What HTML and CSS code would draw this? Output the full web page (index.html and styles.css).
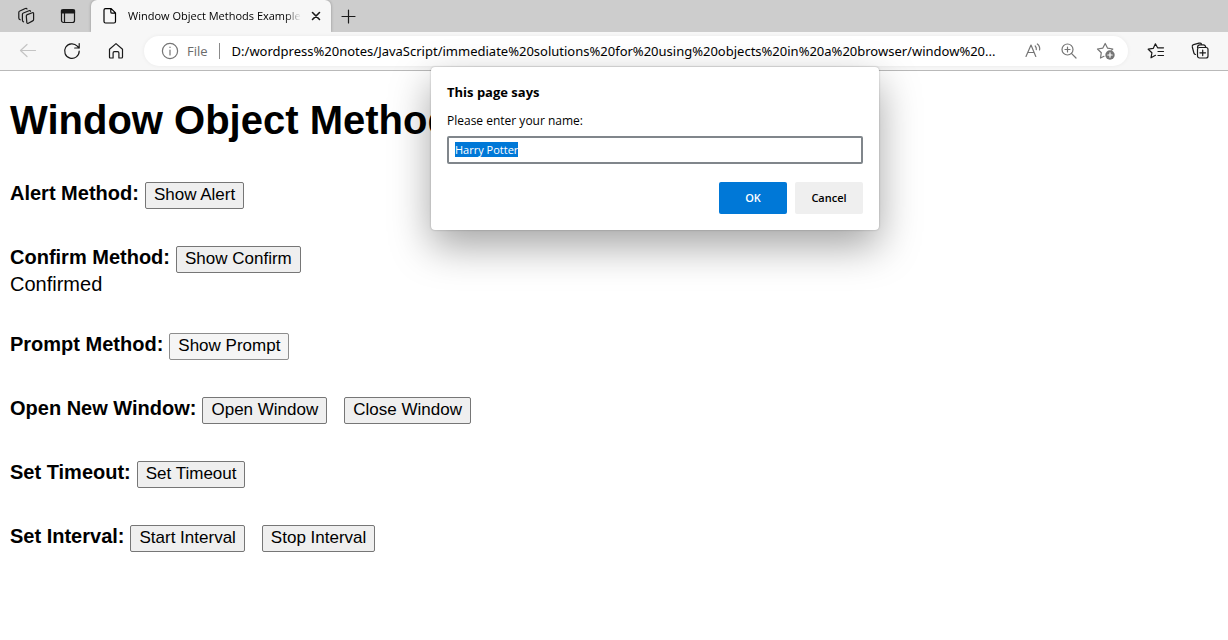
FILE: index.html
```html
<!DOCTYPE html>
<html lang="en">
<head>
<meta charset="utf-8">
<meta name="viewport" content="width=device-width, initial-scale=1">
<title>Window Object Methods Example</title>
<link rel="stylesheet" href="styles.css">
</head>
<body>
<header class="browser">
  <div class="tabstrip">
    <button class="icon-btn strip-btn" aria-label="Workspaces">
      <svg width="18" height="18" viewBox="0 0 18 18"><path d="M9.300 9q0-1 1-1.400l5-1.800q1.300-.4 1.300.9v5.800q0 1-.9 1.400l-4.400 2.300q-1.300.6-1.500-.8zM6.500 14.800q-1.100-.3-1.100-1.500V7.500q0-1.100 1-1.500l5.600-2.300q1.200-.4 1.500.6M3.200 12.800Q1.800 12.300 1.800 11V5.500q0-1.100 1-1.500L8.300 1.500q1.300-.5 1.700.5"/></svg>
    </button>
    <button class="icon-btn strip-btn" aria-label="Tab actions">
      <svg width="18" height="18" viewBox="0 0 18 18"><rect x="2.500" y="2.500" width="13" height="13" rx="2"/><path class="solid" d="M2.500 3h13v3h-13z"/><path d="M5.500 6v9.500"/></svg>
    </button>
    <div class="tab">
      <svg width="18" height="18" viewBox="0 0 18 18"><path d="M4.500 1.600h5.700l4.300 4.300v8.600q0 1.500-1.500 1.500H4.500Q3 16 3 14.500V3.100q0-1.500 1.500-1.500zM9.800 1.800v3.100q0 1.300 1.300 1.300h3.200"/></svg>
      <span class="tab-title">Window Object Methods Example</span>
      <button class="icon-btn" aria-label="Close tab">
        <svg width="12" height="12" viewBox="0 0 12 12"><path class="thick" d="m2.500 2.500 7 7M9.500 2.500l-7 7"/></svg>
      </button>
    </div>
    <button class="icon-btn new-tab" aria-label="New tab">
      <svg width="16" height="16" viewBox="0 0 16 16"><path d="M8.500 2v13M2 8.500h13"/></svg>
    </button>
  </div>
  <div class="toolbar">
    <nav class="nav-buttons">
      <button class="icon-btn disabled" aria-label="Back" disabled>
        <svg width="18" height="18" viewBox="0 0 18 18"><path d="M16.500 8.500H1.500M8 2.500l-6.500 6 6.500 6"/></svg>
      </button>
      <button class="icon-btn" aria-label="Refresh">
        <svg width="18" height="18" viewBox="0 0 18 18"><path d="M16.200 9A7.300 7.300 0 1 1 14.300 4.200L16 6M16.200 1.500V6h-4.500"/></svg>
      </button>
      <button class="icon-btn" aria-label="Home">
        <svg width="18" height="18" viewBox="0 0 18 18"><path d="M2.500 7.300 9 1.600l6.500 5.700v7.700q0 1-1 1h-2.600V11q0-1.300-1.300-1.300H7.400Q6.100 9.700 6.100 11v5H3.500q-1 0-1-1z"/></svg>
      </button>
    </nav>
    <div class="address">
      <svg class="muted" width="18" height="18" viewBox="0 0 18 18"><circle cx="9" cy="9" r="7.600"/><path d="M9 8v5M9 5v.5"/></svg>
      <span class="scheme">File</span>
      <span class="url">D:/wordpress%20notes/JavaScript/immediate%20solutions%20for%20using%20objects%20in%20a%20browser/window%20...</span>
      <div class="address-actions">
        <button class="icon-btn muted" aria-label="Read aloud">
          <svg width="18" height="18" viewBox="0 0 18 18"><path d="M2 14.500 7 3l4.800 11.500M3.800 10.500h6.400M11.200 4q1.500 1.500 1.100 3.600M13.300 2q3 2.300 2.300 6"/></svg>
        </button>
        <button class="icon-btn muted" aria-label="Zoom">
          <svg width="18" height="18" viewBox="0 0 18 18"><circle cx="7.500" cy="7.500" r="5.500"/><path d="m11.400 11.400 4.600 4.600M7.500 5v5M5 7.500h5"/></svg>
        </button>
        <button class="icon-btn muted" aria-label="Add to favorites">
          <svg width="20" height="18" viewBox="0 0 20 18"><path d="M8 14.300 4.500 16l.8-5.300L1.500 7l5.200-.8L9.200 1.500l2.400 4.700 5.200.8-1.200 1.200"/><circle class="badge" cx="14" cy="13" r="4.700"/><path class="plus" d="M14 10.800v4.400M11.800 13h4.400"/></svg>
        </button>
      </div>
    </div>
    <div class="tool-buttons">
      <button class="icon-btn" aria-label="Favorites">
        <svg width="18" height="18" viewBox="0 0 18 18"><path d="M8.500 13.300 4 15.800l.9-5L1.200 7.200l5-.8 2.200-4.600 2.200 4h5.900M11 9.500h5.500M11 13.500h5.500"/></svg>
      </button>
      <button class="icon-btn" aria-label="Collections">
        <svg width="18" height="18" viewBox="0 0 18 18"><rect x="6.500" y="5.500" width="10.500" height="10.500" rx="2"/><path d="M11.700 8v5.600M8.900 10.800h5.600M4.500 12.500Q3.200 12.200 2.900 11L1.300 5q-.4-1.800 1.300-2.300l5.400-1.500q1.900-.4 2.400.5M6.500 5.500q.2-2.700 2.300-2.700h3.700q1.800 0 2.300 2.500"/></svg>
      </button>
    </div>
  </div>
</header>

<main class="page">
  <h1 class="page-title">Window Object Methods Example</h1>
  <section class="demo"><b class="demo-label">Alert Method:</b><button class="demo-btn">Show Alert</button></section>
  <section class="demo"><b class="demo-label">Confirm Method:</b><button class="demo-btn">Show Confirm</button>
    <p class="demo-result">Confirmed</p></section>
  <section class="demo"><b class="demo-label">Prompt Method:</b><button class="demo-btn active">Show Prompt</button></section>
  <section class="demo"><b class="demo-label">Open New Window:</b><button class="demo-btn">Open Window</button><button class="demo-btn second">Close Window</button></section>
  <section class="demo"><b class="demo-label">Set Timeout:</b><button class="demo-btn">Set Timeout</button></section>
  <section class="demo"><b class="demo-label">Set Interval:</b><button class="demo-btn">Start Interval</button><button class="demo-btn second">Stop Interval</button></section>
</main>

<form class="prompt" role="dialog" aria-labelledby="prompt-title">
  <h2 class="prompt-title" id="prompt-title">This page says</h2>
  <label class="prompt-label" for="name">Please enter your name:</label>
  <input class="prompt-input" id="name" type="text" value="Harry Potter" autocomplete="off" spellcheck="false">
  <div class="prompt-actions">
    <button class="prompt-btn primary" type="button">OK</button>
    <button class="prompt-btn" type="button">Cancel</button>
  </div>
</form>
<script src="script.js"></script>
</body>
</html>
```

FILE: styles.css
```css
* { box-sizing: border-box; }

body {
  margin: 0;
  background: #fff;
  color: #000;
  font-family: "Liberation Sans", Arial, sans-serif;
}

button { font: inherit; color: inherit; }

svg {
  display: block;
  flex: none;
  fill: none;
  stroke: currentColor;
  stroke-width: 1.2;
  stroke-linejoin: round;
  stroke-linecap: round;
}
svg .solid, svg .badge { fill: currentColor; }
svg .badge { stroke: none; }
svg .plus { stroke: #fff; }
svg .thick { stroke-width: 1.6; }

/* Browser frame */
.browser {
  font-family: "Open Sans", "Noto Sans", sans-serif;
  background: #f7f7f7;
  border-bottom: 1px solid #b9b9b9;
}
.icon-btn {
  display: flex;
  flex: none;
  padding: 0;
  border: 0;
  background: none;
  color: #1a1a1a;
}
.icon-btn.muted, .muted { color: #757575; }
.icon-btn.disabled { color: #c4c4c4; }

.tabstrip {
  display: flex;
  align-items: center;
  height: 32px;
  background: #cdcdcd;
}
.strip-btn { margin-left: 17px; }
.strip-btn + .strip-btn { margin-left: 24px; }
.tab {
  display: flex;
  align-items: center;
  gap: 9px;
  width: 240px;
  height: 32px;
  margin-left: 14px;
  padding: 0 9px 0 10px;
  border-radius: 6px 6px 0 0;
  background: #f7f7f7;
  box-shadow: 0 0 3px rgba(0, 0, 0, .3);
}
.tab-title {
  flex: 1;
  overflow: hidden;
  font-size: 11px;
  line-height: 20px;
  white-space: nowrap;
  -webkit-mask-image: linear-gradient(to left, transparent, #000 16px);
  mask-image: linear-gradient(to left, transparent, #000 16px);
}
.new-tab { margin-left: 9px; }

.toolbar {
  position: relative;
  display: flex;
  align-items: center;
  height: 38px;
  padding: 0 19px;
  background: #f7f7f7;
}
.nav-buttons { display: flex; gap: 26px; }
.address {
  display: flex;
  flex: 1;
  align-items: center;
  min-width: 0;
  height: 30px;
  margin: 0 19px;
  padding: 0 12px 0 17px;
  border-radius: 15px;
  background: #fff;
  box-shadow: 0 0 4px rgba(0, 0, 0, .06);
}
.scheme {
  margin-left: 8px;
  padding-right: 11px;
  border-right: 1px solid #8a8a8a;
  color: #6b6b6b;
  font-size: 13px;
  line-height: 16px;
}
.url {
  flex: 1;
  overflow: hidden;
  margin-left: 12px;
  font-family: "Noto Sans", sans-serif;
  font-size: 13px;
  line-height: 20px;
  white-space: nowrap;
}
.address-actions { display: flex; gap: 18px; }
.tool-buttons { display: flex; gap: 26px; }

/* Page content */
.page { padding: 26px 10px; }
.page-title {
  margin: 0 0 39px;
  font-size: 40px;
  line-height: 46px;
  white-space: nowrap;
}
.demo {
  display: flex;
  flex-wrap: wrap;
  align-items: baseline;
  margin-bottom: 37px;
  font-size: 20px;
  line-height: 23px;
}
.demo-label { margin-right: 6px; }
.demo-btn {
  padding: 1px 8px 3px;
  border: 1px solid #767676;
  border-radius: 2px;
  background: #efefef;
  font-size: 17px;
  line-height: 21px;
}
.demo-btn.active { border-color: #8d8d8d; background: #f5f5f5; }
.demo-btn.second { margin-left: 17px; }
.demo-result { flex-basis: 100%; margin: 0; }

/* Prompt dialog, floating over the page */
.prompt {
  position: absolute;
  top: 67px;
  left: 431px;
  display: flex;
  flex-direction: column;
  width: 448px;
  padding: 15px 16px 16px;
  border-radius: 4px;
  background: #fff;
  box-shadow: 0 0 2px rgba(0, 0, 0, .3), 0 16px 40px rgba(0, 0, 0, .36);
  font-family: "Open Sans", "Noto Sans", sans-serif;
  font-size: 12px;
  line-height: 20px;
}
.prompt-title {
  margin: 0 0 9px;
  font-size: 13px;
  line-height: 20px;
}
.prompt-label { margin-bottom: 5px; }
.prompt-input {
  height: 28px;
  padding: 0 6px 2px;
  border: 2px solid #80868b;
  border-radius: 2px;
  outline: 0;
  font: inherit;
  font-size: 11px;
}
.prompt-input::selection { background: #0078d7; color: #fff; }
.prompt-actions {
  display: flex;
  justify-content: flex-end;
  gap: 8px;
  margin-top: 18px;
}
.prompt-btn {
  width: 68px;
  height: 32px;
  padding: 0;
  border: 0;
  border-radius: 2px;
  background: #efefef;
  font-size: 11px;
  font-weight: 600;
}
.prompt-btn.primary { background: #0078d7; color: #fff; }
```

FILE: script.js
```js
const nameInput = document.getElementById("name");
nameInput.focus();
nameInput.select();
```
